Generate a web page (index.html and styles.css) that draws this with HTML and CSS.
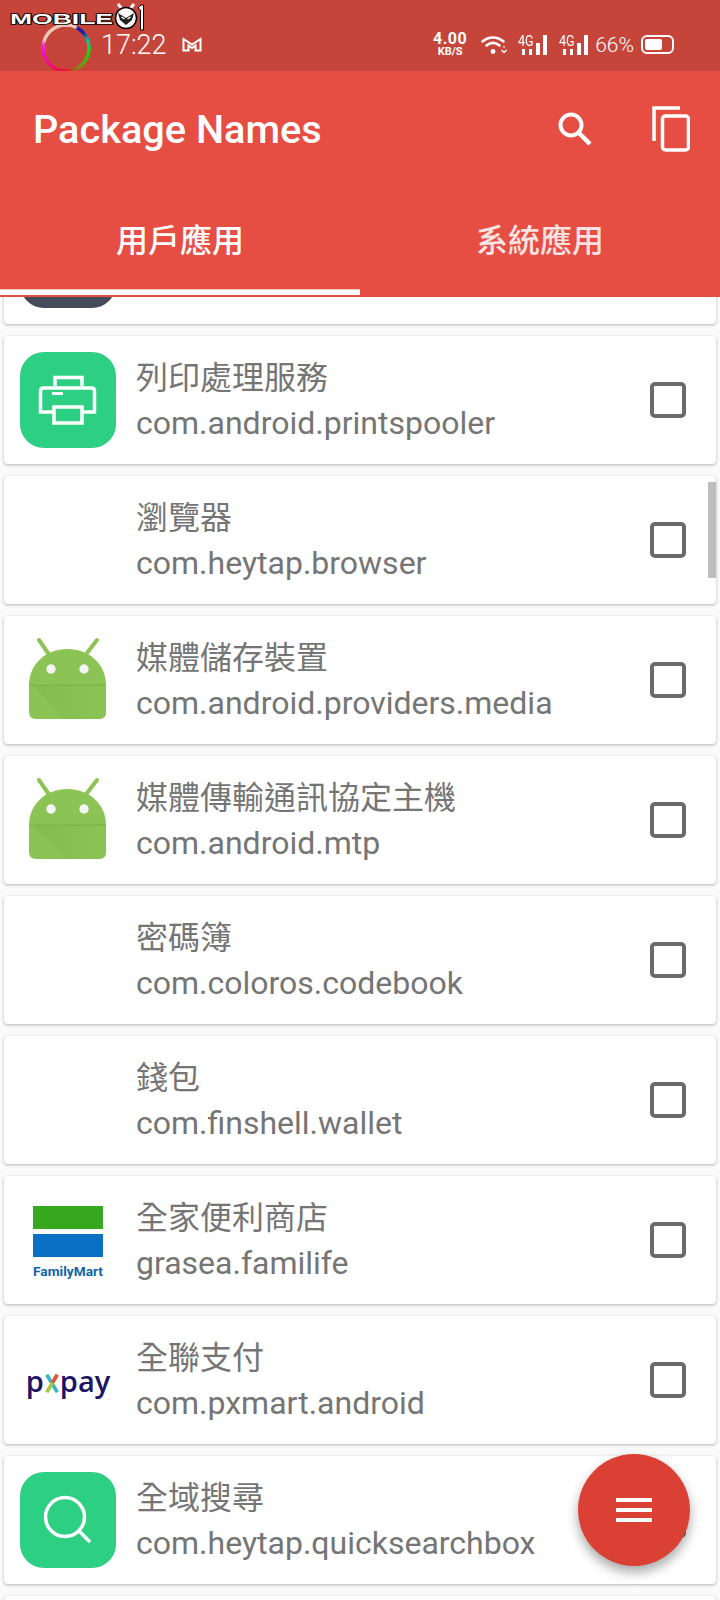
FILE: index.html
```html
<!DOCTYPE html>
<html lang="zh-TW">
<head>
  <meta charset="UTF-8">
  <meta name="viewport" content="width=device-width, initial-scale=1">
  <title>Package Names</title>
  <link rel="stylesheet" href="styles.css">
</head>
<body>

<div class="app">

  <div class="status-bar">
    <div class="ring"></div>
    <span class="clock">17:22</span>
    <svg class="mail-icon" viewBox="0 0 20 15"><path d="M1.500 13.500V2L10 7.500 18.500 2v11.500h-5V8.500L10 11 6.500 8.500v5z" fill="none" stroke="#fff" stroke-width="2"/></svg>
    <div class="status-right">
      <div class="speed"><span class="speed-num">4.00</span><span class="speed-unit">KB/S</span></div>
      <svg class="wifi-icon" viewBox="0 0 26 18"><g fill="none" stroke="#fff" stroke-width="2.500" stroke-linecap="round"><path d="M1.500 5.500c6-5.500 15-5.500 21 0"/><path d="M5.500 9.500c4-3.200 9-3.200 13 0"/></g><circle cx="12" cy="15.500" r="2.400" fill="#fff"/><path d="M20.500 14l2.500 2.500 2.500-2.500" fill="none" stroke="#fff" stroke-width="1.500"/><circle cx="23" cy="11" r="1.300" fill="#f0a090"/></svg>
      <div class="signal"><span class="net">4G</span><svg viewBox="0 0 29 20"><path d="M4 14h3v6H4zM11 14h3v6h-3zM18 8h4v12h-4zM25 0h4v20h-4z" fill="#fff"/></svg></div>
      <div class="signal"><span class="net">4G</span><svg viewBox="0 0 29 20"><path d="M4 14h3v6H4zM11 14h3v6h-3zM18 8h4v12h-4zM25 0h4v20h-4z" fill="#fff"/></svg></div>
      <span class="battery-pct">66%</span>
      <div class="battery"><div class="battery-fill"></div></div>
    </div>
  </div>

  <div class="header">
    <div class="toolbar">
      <h1>Package Names</h1>
      <svg class="search-icon" viewBox="0 0 34 34"><circle cx="13" cy="13" r="10.500" fill="none" stroke="#fff" stroke-width="4"/><path d="M20.500 20.500L32 32" stroke="#fff" stroke-width="4.500"/></svg>
      <svg class="copy-icon" viewBox="0 0 38 46"><path d="M2 35V2h26" fill="none" stroke="#fff" stroke-width="3.500"/><rect x="10.500" y="10" width="26" height="34" rx="3" fill="none" stroke="#fff" stroke-width="3.500"/></svg>
    </div>
    <div class="tabs">
      <div class="tab active">用戶應用</div>
      <div class="tab">系統應用</div>
    </div>
  </div>

  <div class="list">
    <div class="card first-card">
      <div class="icon icon-dark"></div>
    </div>

    <div class="card">
      <div class="icon icon-green">
        <svg viewBox="0 0 96 96"><g fill="none" stroke="#fff" stroke-width="3.500"><path d="M35 34V25.500h27V34"/><path d="M33 60H20.500V39q0-3 3-3h48q3 0 3 3v21H63"/><rect x="34" y="55" width="28" height="16"/></g><path d="M32 41.500h11" stroke="#fff" stroke-width="3"/></svg>
      </div>
      <div class="info">
        <div class="app-name">列印處理服務</div>
        <div class="pkg-name">com.android.printspooler</div>
      </div>
      <div class="checkbox"></div>
    </div>

    <div class="card">
      <div class="icon"></div>
      <div class="info">
        <div class="app-name">瀏覽器</div>
        <div class="pkg-name">com.heytap.browser</div>
      </div>
      <div class="checkbox"></div>
    </div>

    <div class="card">
      <div class="icon">
        <svg viewBox="0 0 96 96"><use href="#android"/></svg>
      </div>
      <div class="info">
        <div class="app-name">媒體儲存裝置</div>
        <div class="pkg-name">com.android.providers.media</div>
      </div>
      <div class="checkbox"></div>
    </div>

    <div class="card">
      <div class="icon">
        <svg viewBox="0 0 96 96"><use href="#android"/></svg>
      </div>
      <div class="info">
        <div class="app-name">媒體傳輸通訊協定主機</div>
        <div class="pkg-name">com.android.mtp</div>
      </div>
      <div class="checkbox"></div>
    </div>

    <div class="card">
      <div class="icon"></div>
      <div class="info">
        <div class="app-name">密碼簿</div>
        <div class="pkg-name">com.coloros.codebook</div>
      </div>
      <div class="checkbox"></div>
    </div>

    <div class="card">
      <div class="icon"></div>
      <div class="info">
        <div class="app-name">錢包</div>
        <div class="pkg-name">com.finshell.wallet</div>
      </div>
      <div class="checkbox"></div>
    </div>

    <div class="card">
      <div class="icon fm-icon">
        <div class="fm-green"></div>
        <div class="fm-blue"></div>
        <div class="fm-text">FamilyMart</div>
      </div>
      <div class="info">
        <div class="app-name">全家便利商店</div>
        <div class="pkg-name">grasea.familife</div>
      </div>
      <div class="checkbox"></div>
    </div>

    <div class="card">
      <div class="icon px-icon">
        <span>p</span>
        <svg class="px-x" viewBox="0 0 16 22"><path d="M2 1l12 20" stroke="#35b6c8" stroke-width="4"/><path d="M14 1L2 21" stroke="#a8c83a" stroke-width="4"/><path d="M14 1L8.500 10" stroke="#e8503a" stroke-width="4"/></svg>
        <span>pay</span>
      </div>
      <div class="info">
        <div class="app-name">全聯支付</div>
        <div class="pkg-name">com.pxmart.android</div>
      </div>
      <div class="checkbox"></div>
    </div>

    <div class="card">
      <div class="icon icon-green">
        <svg viewBox="0 0 96 96"><circle cx="45" cy="45" r="19.500" fill="none" stroke="#fff" stroke-width="3.500"/><path d="M59 59l11 11" stroke="#fff" stroke-width="3.500"/></svg>
      </div>
      <div class="info">
        <div class="app-name">全域搜尋</div>
        <div class="pkg-name">com.heytap.quicksearchbox</div>
      </div>
      <div class="checkbox"></div>
    </div>

    <div class="card"></div>

    <div class="scrollbar"></div>
  </div>

  <div class="fab">
    <svg viewBox="0 0 36 24"><path d="M0 0h36v4H0zM0 10h36v4H0zM0 20h36v4H0z" fill="#fff"/></svg>
  </div>

  <svg class="watermark" viewBox="0 0 136 32">
    <text x="1" y="23" textLength="103" lengthAdjust="spacingAndGlyphs" class="wm-text">MOBILE</text>
    <path d="M109 3l5 6M125 3l-5 6" stroke="#fff" stroke-width="3"/>
    <circle cx="117" cy="17" r="10.500" fill="#fff" stroke="#000" stroke-width="1.500"/>
    <path d="M109 12l8 5 8-5-2 7-6 5-6-5z" fill="#222"/>
    <path d="M112.500 16l3 2M121.500 16l-3 2" stroke="#fff" stroke-width="1.500"/>
    <path d="M129 7l3-3h2.500v25h-3V9z" fill="#fff" stroke="#000"/>
  </svg>

</div>

<svg class="defs" width="0" height="0">
  <defs>
    <linearGradient id="android-fold" x1="0" y1="0" x2="1" y2="0">
      <stop offset="0" stop-color="#82bd4e"/>
      <stop offset="1" stop-color="#8bc454"/>
    </linearGradient>
    <g id="android">
      <path d="M19 8l9 13M77 8l-10 13" stroke="#8bc454" stroke-width="4" stroke-linecap="round"/>
      <path d="M9 53C9 32 26 17 47.500 17S86 32 86 53z" fill="#8bc454"/>
      <path d="M9 53h77v27q0 7-7 7H16q-7 0-7-7z" fill="#8bc454"/>
      <path d="M13 54h73v26q0 7-7 7H45z" fill="url(#android-fold)"/>
      <path d="M9 52.500h77v1.500H9z" fill="#7db54a"/>
      <circle cx="31" cy="37" r="4.700" fill="#f4f4f4"/>
      <circle cx="64" cy="37" r="4.700" fill="#f4f4f4"/>
    </g>
  </defs>
</svg>

</body>
</html>
```

FILE: styles.css
```css
* {
  box-sizing: border-box;
}

body {
  margin: 0;
  background-color: #fafafa;
  font-family: Roboto, "Noto Sans CJK TC", sans-serif;
}

.app {
  position: relative;
  width: 720px;
  height: 1600px;
  overflow: hidden;
  display: flex;
  flex-direction: column;
}

.defs {
  position: absolute;
}

/* status bar */
.status-bar {
  height: 71px;
  flex: none;
  display: flex;
  align-items: center;
  background-color: #c5453a;
  color: #fff;
  padding: 0 46px 0 41px;
}

.ring {
  width: 50px;
  height: 50px;
  border-radius: 50%;
  margin-top: 24px;
  background: conic-gradient(#efc4b4 0deg, #efc4b4 25deg, #1a1aa8 30deg, #1a20a0 48deg, #10c0a0 70deg, #20d010 100deg, #7a9010 145deg, #f01030 180deg, #f01050 205deg, #f010d0 260deg, #f030c0 278deg, #efc4b4 290deg);
  -webkit-mask: radial-gradient(circle, transparent 21px, #000 21.500px);
  mask: radial-gradient(circle, transparent 21px, #000 21.500px);
}

.clock {
  font-size: 27px;
  font-weight: 300;
  margin-left: 10px;
  margin-top: 18px;
}

.mail-icon {
  width: 20px;
  height: 15px;
  margin-left: 15px;
  margin-top: 18px;
}

.status-right {
  margin-left: auto;
  margin-top: 18px;
  display: flex;
  align-items: center;
}

.speed {
  display: flex;
  flex-direction: column;
  align-items: center;
  font-weight: 700;
  line-height: 13px;
}

.speed-num {
  font-size: 16px;
  letter-spacing: 0.500px;
}

.speed-unit {
  font-size: 11px;
}

.wifi-icon {
  width: 26px;
  height: 18px;
  margin-left: 14px;
}

.signal {
  position: relative;
  width: 29px;
  height: 20px;
  margin-left: 11px;
}

.signal svg {
  display: block;
  width: 29px;
  height: 20px;
}

.signal + .signal {
  margin-left: 12px;
}

.net {
  position: absolute;
  left: 0;
  top: -1px;
  font-size: 14px;
  line-height: 14px;
  transform: scaleX(0.900);
  transform-origin: left;
}

.battery-pct {
  font-size: 21px;
  font-weight: 300;
  margin-left: 7px;
}

.battery {
  width: 33px;
  height: 19px;
  margin-left: 7px;
  border: 2px solid #fff;
  border-radius: 6px;
  padding: 2px;
}

.battery-fill {
  width: 66%;
  height: 100%;
  background-color: #fff;
  border-radius: 2px;
}

/* app bar */
.header {
  flex: none;
  height: 226px;
  background-color: #e74e43;
  color: #fff;
  position: relative;
  z-index: 2;
}

.toolbar {
  height: 112px;
  display: flex;
  align-items: center;
  padding: 4px 30px 0 33px;
}

.toolbar h1 {
  margin: 0 auto 0 0;
  font-size: 39.700px;
  font-weight: 500;
}

.search-icon {
  width: 34px;
  height: 34px;
  margin-right: 60px;
}

.copy-icon {
  width: 38px;
  height: 46px;
}

.tabs {
  display: flex;
  height: 114px;
}

.tab {
  position: relative;
  flex: 1;
  display: flex;
  align-items: center;
  justify-content: center;
  font-size: 32px;
  font-weight: 500;
  color: rgba(255,255,255,0.85);
  padding-bottom: 4px;
}

.tab.active {
  color: #fff;
}

.tab.active::after {
  content: "";
  position: absolute;
  left: 0;
  right: 0;
  bottom: 2px;
  height: 5px;
  background-color: #fff;
  border-top: 1px solid #f4c6c0;
}

/* list of apps */
.list {
  position: relative;
  flex: 1;
  overflow: hidden;
  display: flex;
  flex-direction: column;
  gap: 12px;
  padding: 0 4px;
}

.card {
  flex: none;
  height: 128px;
  display: flex;
  align-items: center;
  padding: 0 30px 0 16px;
  background-color: #fff;
  border-radius: 4px;
  box-shadow: 0 1px 3px rgba(0,0,0,0.3);
}

.first-card {
  margin-top: -101px;
  align-items: flex-start;
  padding-top: 16px;
}

.icon {
  flex: none;
  width: 96px;
  height: 96px;
  border-radius: 24px;
}

.icon svg {
  display: block;
}

.icon-dark {
  background-color: #454c59;
}

.icon-green {
  background-color: #2dd082;
}

.info {
  flex: 1;
  margin: 0 0 1px 20px;
  color: #757575;
}

.app-name {
  font-size: 32px;
  line-height: 46px;
}

.pkg-name {
  font-size: 32px;
  line-height: 44px;
}

.checkbox {
  flex: none;
  width: 36px;
  height: 36px;
  border: 4px solid #6a6a6a;
  border-radius: 5px;
}

.scrollbar {
  position: absolute;
  right: 4px;
  top: 185px;
  width: 8px;
  height: 96px;
  background-color: #bdbdbd;
}

/* logos */
.fm-icon {
  display: flex;
  flex-direction: column;
  align-items: center;
  padding-top: 14px;
}

.fm-green,
.fm-blue {
  width: 70px;
  height: 23px;
}

.fm-green {
  background-color: #36a81f;
}

.fm-blue {
  margin-top: 5px;
  background-color: #0a70c4;
}

.fm-text {
  margin-top: 5px;
  font-size: 13.700px;
  line-height: 18px;
  font-weight: 700;
  color: #0f64a8;
}

.px-icon {
  display: flex;
  align-items: center;
  justify-content: center;
  font-family: "Open Sans", sans-serif;
  font-size: 29px;
  font-weight: 600;
  color: #1c1464;
}

.px-x {
  width: 14px;
  height: 21px;
  margin: 6px 1px 0;
}

/* floating button */
.fab {
  position: absolute;
  left: 578px;
  top: 1454px;
  width: 112px;
  height: 112px;
  border-radius: 50%;
  background-color: #db4035;
  box-shadow: 0 6px 12px rgba(0,0,0,0.35);
  display: flex;
  align-items: center;
  justify-content: center;
  z-index: 3;
}

.fab svg {
  width: 36px;
  height: 24px;
}

/* watermark over the status bar */
.watermark {
  position: absolute;
  left: 9px;
  top: 1px;
  width: 136px;
  height: 32px;
  z-index: 4;
}

.wm-text {
  font-family: "Liberation Sans", sans-serif;
  font-size: 15px;
  font-weight: 700;
  fill: #fff;
  stroke: #000;
  stroke-width: 1.500px;
  paint-order: stroke;
}
```
